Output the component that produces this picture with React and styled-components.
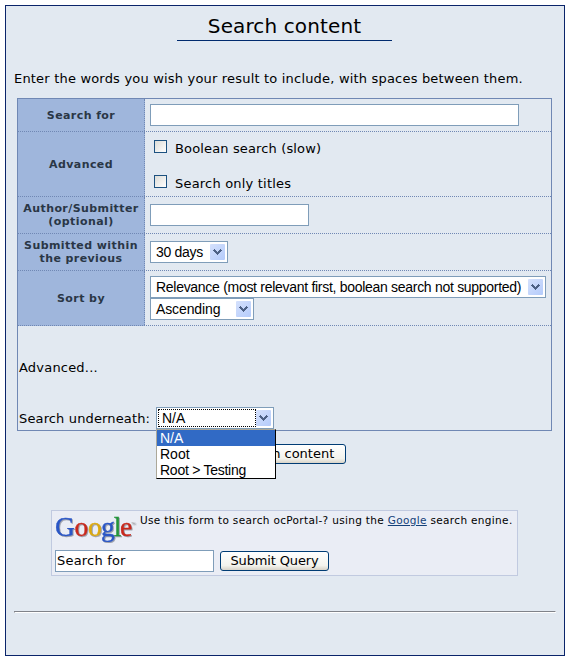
import React from "react";
import styled, { createGlobalStyle } from "styled-components";

const GlobalStyle = createGlobalStyle`
  * { box-sizing: border-box; }
  body {
    margin: 0;
    background: #fff;
    color: #000;
    font: 13px/16px Verdana, "DejaVu Sans", sans-serif;
  }
`;

const Frame = styled.main`
  width: 560px;
  height: 651px;
  margin: 5px 0 0 5px;
  padding: 0 8px;
  border: 1px solid #0a246a;
  background: #e2e9f1;
  overflow: hidden;
`;

const Title = styled.h1`
  width: 215px;
  height: 35px;
  margin: 0 0 0 163px;
  padding-top: 8px;
  border-bottom: 1px solid #002a6e;
  font-size: 20px;
  font-weight: normal;
  line-height: 24px;
  letter-spacing: 0.12px;
  text-align: center;
  white-space: nowrap;
`;

const Text = styled.span`
  letter-spacing: ${(p) => p.$track || "0"};
  white-space: nowrap;
`;

const Intro = styled.p`
  margin: 30px 0 0;
  letter-spacing: 0.19px;
  white-space: nowrap;
`;

const SearchForm = styled.section`
  width: 535px;
  height: 333px;
  margin: 11px 0 0 3px;
  border: 1px solid #7088b4;
`;

const Row = styled.div`
  display: grid;
  grid-template: 100% / 127px 1fr;
  height: ${(p) => p.$height}px;
  border-bottom: 1px dotted #7088b4;
  background: linear-gradient(#9fb6dc, #9fb6dc) 0 0 / 127px 100% no-repeat border-box;
`;

const Label = styled.div`
  display: flex;
  align-items: center;
  justify-content: center;
  border-right: 1px dotted #7088b4;
  color: #2a3646;
  font-size: 11px;
  font-weight: bold;
  line-height: 13px;
  letter-spacing: 0.42px;
  text-align: center;
  white-space: pre;
`;

const Field = styled.div`
  display: flex;
  flex-direction: column;
  align-items: flex-start;
  padding: ${(p) => p.$top || 5}px 0 0 5px;
`;

const Input = styled.div`
  width: ${(p) => p.$width}px;
  height: 22px;
  padding: 2px 1px;
  border: 1px solid #7f9db9;
  background: #fff;
  letter-spacing: 0.2px;
`;

const CheckRow = styled.label`
  display: flex;
  flex: none;
  align-items: flex-start;
  gap: 8px;
  padding-left: 4px;

  & + & { margin-top: 18px; }
  ${Text} { padding-top: 1px; }
`;

const CheckBox = styled.span`
  width: 13px;
  height: 13px;
  border: 1px solid #1c5180;
  background: linear-gradient(135deg, #dcdcd7, #fff);
`;

const SelectBox = styled.div`
  display: flex;
  align-items: center;
  justify-content: space-between;
  width: ${(p) => p.$width}px;
  height: 22px;
  padding: 2px;
  border: 1px solid #7f9db9;
  background: #fff;
  font: 14px/16px "Liberation Sans", Arial, sans-serif;
`;

const SelectValue = styled.span`
  flex: 1;
  min-width: 0;
  height: 18px;
  margin: -1px 0 -1px -1px;
  padding-left: 3px;
  border: 1px ${(p) => (p.$focused ? "dotted #000" : "solid transparent")};
  letter-spacing: ${(p) => p.$track || "0"};
  white-space: nowrap;
`;

const ArrowBox = styled.span`
  display: grid;
  flex: none;
  place-items: center;
  width: 15px;
  height: 16px;
  border-radius: 1px;
  background: linear-gradient(135deg, #d5e1fc, #b4cbfb);
`;

const Advanced = styled.div`
  padding: 34px 0 0 1px;
`;

const Underneath = styled.div`
  display: flex;
  justify-content: flex-start;
  align-items: flex-start;
  margin-top: 31px;
`;

const UnderneathLabel = styled.span`
  width: 137px;
  padding-top: 4px;
  letter-spacing: 0.14px;
  white-space: nowrap;
`;

const Dropdown = styled.div`
  position: relative;
`;

const Menu = styled.ul`
  position: absolute;
  z-index: 2;
  top: 22px;
  left: 0;
  width: 120px;
  height: 50px;
  margin: 0;
  padding: 0;
  border: 1px solid;
  border-color: #aca899 #000 #000 #aca899;
  background: #fff;
  list-style: none;
`;

const Option = styled.li`
  height: 16px;
  padding-left: 3px;
  background: ${(p) => (p.$selected ? "#316ac5" : "#fff")};
  color: ${(p) => (p.$selected ? "#fff" : "#000")};
  font: 14px/16px "Liberation Sans", Arial, sans-serif;
  letter-spacing: ${(p) => p.$track || "0"};
  white-space: nowrap;
`;

const Actions = styled.div`
  display: flex;
  justify-content: center;
  margin-top: 13px;
`;

const Button = styled.button`
  width: ${(p) => p.$width}px;
  height: 20px;
  padding: 0;
  border: 1px solid #003c74;
  border-radius: 3px;
  background: linear-gradient(#fff, #f3f3ed 75%, #d8d3c8);
  color: #000;
  font: 13px/16px Verdana, "DejaVu Sans", sans-serif;
  letter-spacing: ${(p) => p.$track || "0"};
  white-space: nowrap;
`;

const GooglePanel = styled.section`
  width: 467px;
  height: 66px;
  margin: 46px 0 0 37px;
  padding: 4px 3px 0;
  border: 1px solid #c1cae0;
  background: #eaedf5;
`;

const GoogleTop = styled.div`
  display: flex;
  height: 35px;
`;

const Logo = styled.svg`
  flex: none;
  overflow: visible;
  filter: drop-shadow(1px 1px 0.5px rgba(60, 65, 80, 0.45));
`;

const Note = styled.p`
  margin: -1px 0 0 5px;
  font-size: 10.5px;
  line-height: 12px;
  letter-spacing: 0.335px;
  white-space: nowrap;

  a { color: #144179; }
`;

const QueryRow = styled.div`
  display: flex;
  gap: 6px;

  button { margin-top: 1px; }
`;

const Divider = styled.hr`
  height: 2px;
  margin: 35px 0 0;
  border: 1px solid;
  border-color: #80838a #fff #fff #80838a;
`;

function Select({ width, value, track, focused }) {
  return (
    <SelectBox $width={width}>
      <SelectValue $track={track} $focused={focused}>{value}</SelectValue>
      <ArrowBox>
        <svg width="9" height="6" viewBox="0 0 9 6" shapeRendering="crispEdges" fill="#4d6185">
          <path d="M0 1h1V0h1v1h1v1h1v1h1V2h1V1h1V0h1v1h1v1H8v1H7v1H6v1H5v1H4V5H3V4H2V3H1V2H0z" />
        </svg>
      </ArrowBox>
    </SelectBox>
  );
}

function GoogleLogo() {
  return (
    <Logo width="80" height="32" viewBox="0 0 80 32" fontFamily="Liberation Serif, serif">
      <text y="20.5" fontSize="27.5" strokeWidth="0.4">
        <tspan x="0" fill="#2a56c6" stroke="#2a56c6">G</tspan>
        <tspan x="19.5" fill="#c9281c" stroke="#c9281c">o</tspan>
        <tspan x="33" fill="#dda90d" stroke="#dda90d">o</tspan>
        <tspan x="46" fill="#2a56c6" stroke="#2a56c6">g</tspan>
        <tspan x="58.8" fill="#23953a" stroke="#23953a">l</tspan>
        <tspan x="65" fill="#c9281c" stroke="#c9281c">e</tspan>
      </text>
      <path d="M76.5 7.5h1.5M77.2 7.5v2M78.5 9.5v-2l.7 1 .7-1v2" fill="none" stroke="#999" strokeWidth="0.4" />
    </Logo>
  );
}

export default function App() {
  return (
    <>
      <GlobalStyle />
      <Frame>
        <Title>Search content</Title>
        <Intro>Enter the words you wish your result to include, with spaces between them.</Intro>
        <SearchForm>
          <Row $height={33}>
            <Label>Search for</Label>
            <Field><Input $width={369} /></Field>
          </Row>
          <Row $height={65}>
            <Label>Advanced</Label>
            <Field $top={8}>
              <CheckRow><CheckBox /><Text $track="0.14px">Boolean search (slow)</Text></CheckRow>
              <CheckRow><CheckBox /><Text $track="0.2px">Search only titles</Text></CheckRow>
            </Field>
          </Row>
          <Row $height={37}>
            <Label>{"Author/Submitter\n(optional)"}</Label>
            <Field $top={7}><Input $width={159} /></Field>
          </Row>
          <Row $height={37}>
            <Label>{"Submitted within\nthe previous"}</Label>
            <Field $top={7}><Select width={78} value="30 days" track="-0.3px" /></Field>
          </Row>
          <Row $height={55}>
            <Label>Sort by</Label>
            <Field>
              <Select
                width={396}
                value="Relevance (most relevant first, boolean search not supported)"
                track="-0.29px"
              />
              <Select width={104} value="Ascending" track="-0.12px" />
            </Field>
          </Row>
          <Advanced>
            <Text $track="0.2px">Advanced...</Text>
            <Underneath>
              <UnderneathLabel>Search underneath:</UnderneathLabel>
              <Dropdown>
                <Select width={118} value="N/A" focused />
                <Menu>
                  <Option $selected>N/A</Option>
                  <Option>Root</Option>
                  <Option $track="-0.26px">Root &gt; Testing</Option>
                </Menu>
              </Dropdown>
            </Underneath>
          </Advanced>
        </SearchForm>
        <Actions><Button $width={122}>Search content</Button></Actions>
        <GooglePanel>
          <GoogleTop>
            <GoogleLogo />
            <Note>Use this form to search ocPortal-? using the <a href="#google">Google</a> search engine.</Note>
          </GoogleTop>
          <QueryRow>
            <Input $width={159}>Search for</Input>
            <Button $width={109} $track="-0.15px">Submit Query</Button>
          </QueryRow>
        </GooglePanel>
        <Divider />
      </Frame>
    </>
  );
}
